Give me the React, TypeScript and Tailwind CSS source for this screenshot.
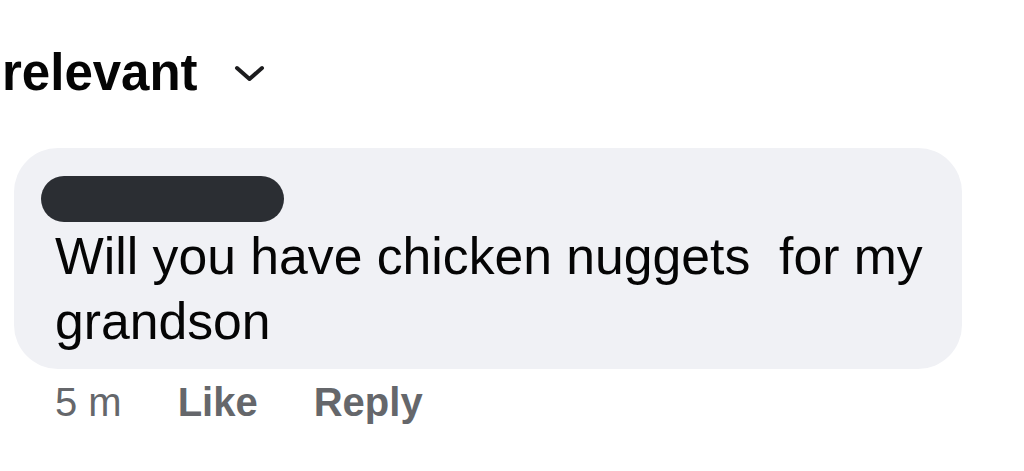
import React from "react";

export default function App() {
  return (
    <div className="w-[1024px] h-[471px] bg-white overflow-hidden" style={{ fontFamily: '"Liberation Sans", Arial, sans-serif' }}>
      <div className="pt-[48px] pl-[2px] flex items-center h-[98px]">
        <span className="text-[51px] leading-[50px] font-bold text-[#050505]">relevant</span>
        <svg className="ml-[36px] mt-[2px]" width="31" height="18" viewBox="0 0 31 18" fill="none">
          <polyline points="3,3 15.5,14 28,3" stroke="#1c1c1e" strokeWidth="4" strokeLinecap="round" strokeLinejoin="round" />
        </svg>
      </div>
      <div className="ml-[14px] mt-[50px] w-[948px] rounded-[44px] bg-[#f0f1f5] pt-[28px] pb-[15px] pl-[27px] pr-[20px]">
        <div className="w-[243px] h-[46px] rounded-full bg-[#2b2e33]" />
        <div className="mt-[2px] pl-[14px] text-[51.7px] leading-[65px] text-[#050505]">
          Will you have chicken nuggets{"\u00a0\u00a0"}for my grandson
        </div>
      </div>
      <div className="mt-[13px] ml-[55px] flex items-center gap-[56px] text-[40px] leading-[40px] text-[#65676b]">
        <span>5 m</span>
        <span className="font-bold">Like</span>
        <span className="font-bold">Reply</span>
      </div>
    </div>
  );
}
